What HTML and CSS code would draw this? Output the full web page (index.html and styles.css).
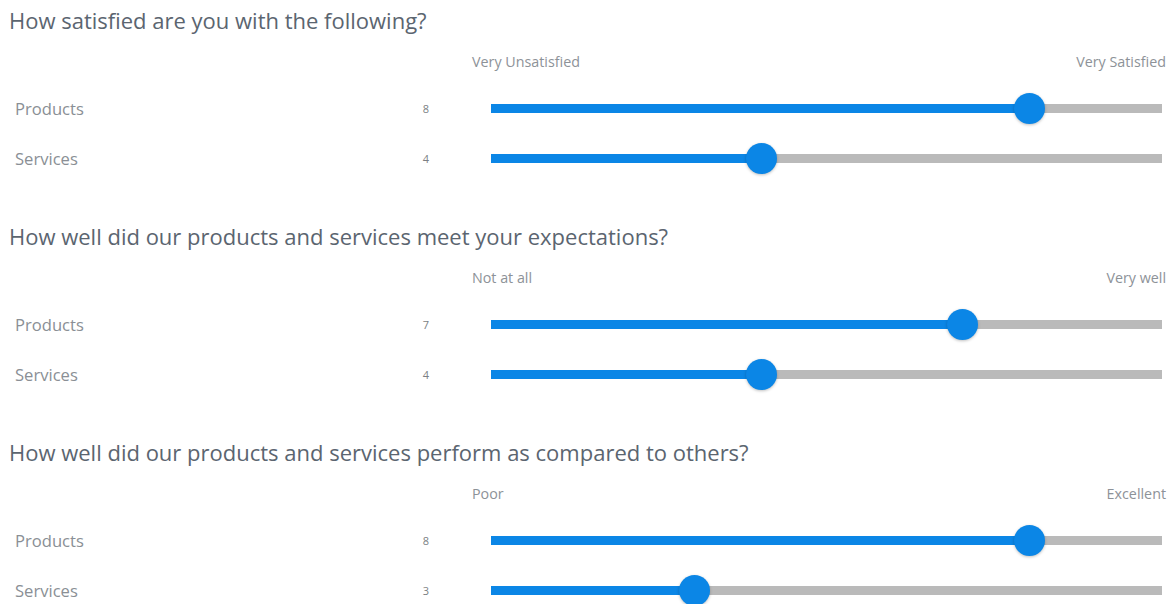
FILE: index.html
```html
<!DOCTYPE html>
<html lang="en">
<head>
<meta charset="utf-8">
<title>Satisfaction survey</title>
<link rel="stylesheet" href="styles.css">
</head>
<body>
<main class="survey">
  <section class="question">
    <h2 class="question-title">How satisfied are you with the following?</h2>
    <div class="scale">
      <span>Very Unsatisfied</span>
      <span>Very Satisfied</span>
    </div>
    <div class="item">
      <span class="item-label">Products</span>
      <span class="item-value">8</span>
      <div class="slider"><div class="track"><div class="fill" style="width: calc(80% + 2px)"></div><div class="thumb" style="left: calc(80% + 2px)"></div></div></div>
    </div>
    <div class="item">
      <span class="item-label">Services</span>
      <span class="item-value">4</span>
      <div class="slider"><div class="track"><div class="fill" style="width: calc(40% + 2px)"></div><div class="thumb" style="left: calc(40% + 2px)"></div></div></div>
    </div>
  </section>

  <section class="question">
    <h2 class="question-title">How well did our products and services meet your expectations?</h2>
    <div class="scale">
      <span>Not at all</span>
      <span>Very well</span>
    </div>
    <div class="item">
      <span class="item-label">Products</span>
      <span class="item-value">7</span>
      <div class="slider"><div class="track"><div class="fill" style="width: calc(70% + 2px)"></div><div class="thumb" style="left: calc(70% + 2px)"></div></div></div>
    </div>
    <div class="item">
      <span class="item-label">Services</span>
      <span class="item-value">4</span>
      <div class="slider"><div class="track"><div class="fill" style="width: calc(40% + 2px)"></div><div class="thumb" style="left: calc(40% + 2px)"></div></div></div>
    </div>
  </section>

  <section class="question">
    <h2 class="question-title">How well did our products and services perform as compared to others?</h2>
    <div class="scale">
      <span>Poor</span>
      <span>Excellent</span>
    </div>
    <div class="item">
      <span class="item-label">Products</span>
      <span class="item-value">8</span>
      <div class="slider"><div class="track"><div class="fill" style="width: calc(80% + 2px)"></div><div class="thumb" style="left: calc(80% + 2px)"></div></div></div>
    </div>
    <div class="item">
      <span class="item-label">Services</span>
      <span class="item-value">3</span>
      <div class="slider"><div class="track"><div class="fill" style="width: calc(30% + 2px)"></div><div class="thumb" style="left: calc(30% + 2px)"></div></div></div>
    </div>
  </section>
</main>
</body>
</html>
```

FILE: styles.css
```css
html, body {
  margin: 0;
  padding: 0;
  background: #ffffff;
}

body {
  font-family: "Open Sans", "Noto Sans", "Liberation Sans", sans-serif;
  overflow: hidden;
}

.survey {
  padding: 8px 0 0 15px;
  width: 1151px;
}

.question {
  margin-bottom: 41px;
}

.question-title {
  margin: 0 0 22px -6px;
  font-size: 22px;
  line-height: 24px;
  font-weight: 400;
  color: #5b6570;
}

.scale {
  display: flex;
  justify-content: space-between;
  margin-left: 457px;
  width: 694px;
  font-size: 14.3px;
  line-height: 16px;
  color: #8d9298;
  margin-bottom: 13px;
}

.item {
  display: flex;
  align-items: center;
  height: 50px;
}

.item-label {
  width: 395px;
  font-size: 16.6px;
  color: #8a8f95;
}

.item-value {
  width: 32px;
  text-align: center;
  font-size: 11px;
  color: #7b7f84;
}

.slider {
  margin-left: 30px;
  width: 694px;
  padding: 0 4px 0 19px;
  box-sizing: border-box;
}

.track {
  position: relative;
  height: 9px;
  background: #bababa;
}

.fill {
  height: 100%;
  background: #0b86e6;
}

.thumb {
  position: absolute;
  top: 50%;
  width: 31px;
  height: 31px;
  margin: -15.5px 0 0 -15.5px;
  border-radius: 50%;
  background: #0b86e6;
  box-shadow: 0 1px 3px rgba(0, 0, 0, 0.25);
}
```
